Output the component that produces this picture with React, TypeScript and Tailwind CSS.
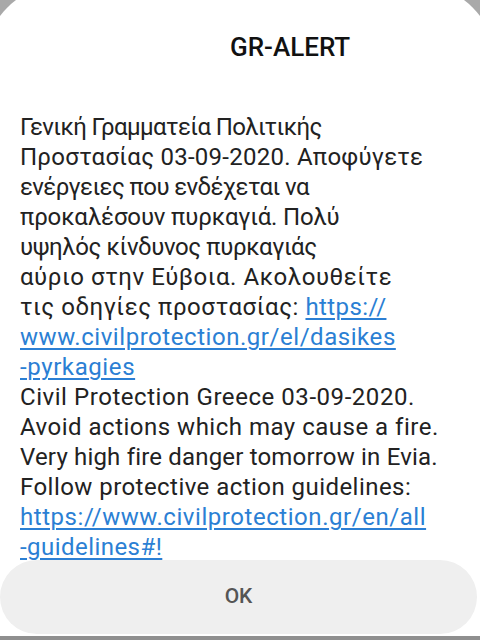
import React from "react";

type Line = { t: string; tc?: string; link?: string; lc?: string };

const lines: Line[] = [
  { t: "Γενική Γραμματεία Πολιτικής", tc: "tracking-[-0.6px]" },
  { t: "Προστασίας 03-09-2020. Αποφύγετε", tc: "tracking-[0.25px]" },
  { t: "ενέργειες που ενδέχεται να", tc: "tracking-[-0.6px]" },
  { t: "προκαλέσουν πυρκαγιά. Πολύ", tc: "tracking-[-0.15px]" },
  { t: "υψηλός κίνδυνος πυρκαγιάς", tc: "tracking-[-0.4px]" },
  { t: "αύριο στην Εύβοια. Ακολουθείτε", tc: "tracking-[0.55px]" },
  { t: "τις οδηγίες προστασίας: ", tc: "tracking-[0.55px]", link: "https://", lc: "tracking-[0.4px]" },
  { t: "", link: "www.civilprotection.gr/el/dasikes", lc: "tracking-[0.55px]" },
  { t: "", link: "-pyrkagies", lc: "tracking-[0.6px]" },
  { t: "Civil Protection Greece 03-09-2020.", tc: "tracking-[0.55px]" },
  { t: "Avoid actions which may cause a fire.", tc: "tracking-[0.5px]" },
  { t: "Very high fire danger tomorrow in Evia.", tc: "tracking-[0.18px]" },
  { t: "Follow protective action guidelines:", tc: "tracking-[0.45px]" },
  { t: "", link: "https://www.civilprotection.gr/en/all", lc: "tracking-[0.55px]" },
  { t: "", link: "-guidelines#!", lc: "tracking-[0.45px]" },
];

export default function App() {
  return (
    <div
      className="w-[480px] h-[640px] bg-[#a9a9a9] overflow-hidden flex flex-col"
      style={{ fontFamily: "Roboto, 'Noto Sans', sans-serif" }}
    >
      <div className="-mx-4 -mt-4 pt-4 px-4 pb-[2px] rounded-t-[80px] bg-white h-[652px] flex flex-col shrink-0">
        <div className="pl-[230px] mt-[31px] text-[26px] leading-[32px] font-medium text-[#111111] whitespace-nowrap">
          GR-ALERT
        </div>
        <div className="pl-[20px] mt-[49px] text-[24px] leading-[30px] text-[#222222]">
          {lines.map((l, i) => (
            <div key={i} className="whitespace-nowrap h-[30px]">
              {l.t && <span className={l.tc}>{l.t}</span>}
              {l.link && (
                <span
                  className={
                    "text-[#2b7fd4] underline decoration-[1.5px] underline-offset-[3px] " +
                    (l.lc ?? "")
                  }
                >
                  {l.link}
                </span>
              )}
            </div>
          ))}
        </div>
        <div className="-mt-[2px] w-[477px] h-[74px] shrink-0 rounded-full bg-[#efefef] flex items-center justify-center text-[21px] font-medium text-[#555555]">
          OK
        </div>
      </div>
      <div className="flex-1 bg-[#8f8f8f]" />
    </div>
  );
}
